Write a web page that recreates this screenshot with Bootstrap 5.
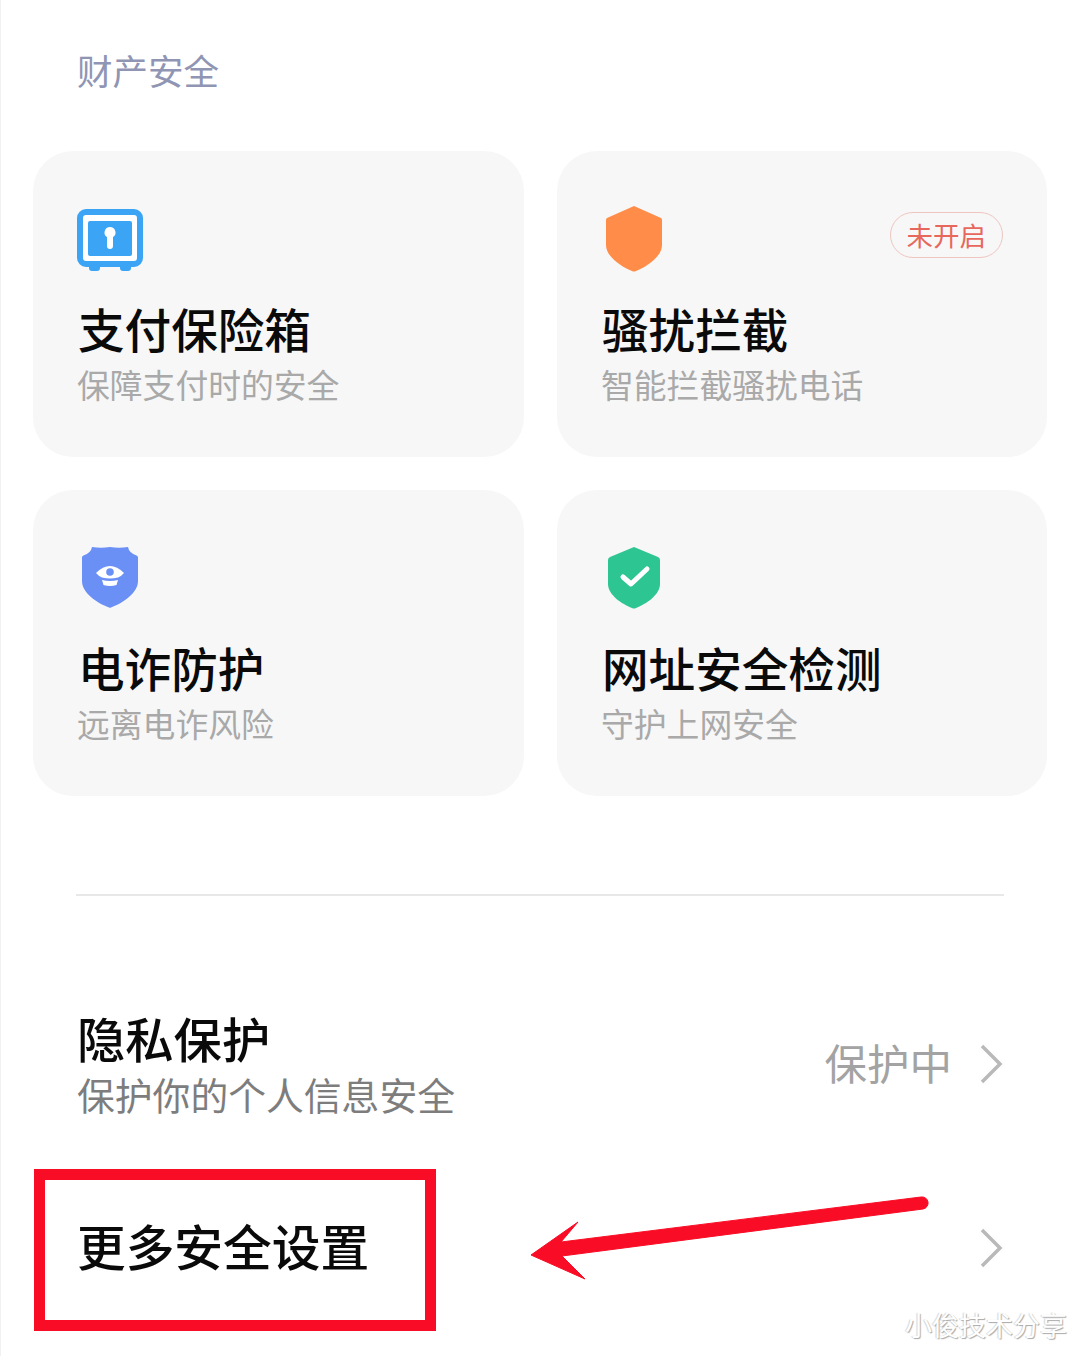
<!DOCTYPE html>
<html lang="zh-CN">
<head>
  <meta charset="UTF-8" />
  <meta name="viewport" content="width=device-width, initial-scale=1.0"/>
  <title>财产安全</title>
  <link href="https://cdn.jsdelivr.net/npm/bootstrap@5.3.0/dist/css/bootstrap.min.css" rel="stylesheet"/>
  <style>
    body {
      background: #fff;
      font-family: "Noto Sans CJK SC", "Liberation Sans", sans-serif;
      height: 1356px;
      overflow: hidden;
    }
    .screen {
      height: 1356px;
      padding: 0 33px 0 32px;
      border-left: 1px solid #f1f1f1;
    }
    .sec-title {
      font-size: 35.5px;
      line-height: 52px;
      color: #9095b4;
      padding: 44px 0 55px 44px;
    }
    .tile-grid {
      display: grid;
      grid-template-columns: 491px 490px;
      grid-auto-rows: 306px;
      gap: 33px;
    }
    .tile {
      background: #f7f7f7;
      border-radius: 40px;
      padding: 52px 44px 0 45px;
    }
    .tile-top {
      height: 82px;
    }
    .ico-safe {
      margin: 6px 0 0 -1px;
    }
    .ico-orange {
      margin: 3px 0 0 3px;
    }
    .ico-blue {
      margin: 3px 0 0 4px;
    }
    .ico-green {
      margin: 5px 0 0 6px;
    }
    .tile-name {
      font-size: 46.6px;
      font-weight: 500;
      line-height: 60px;
      color: #0a0a0a;
      margin-top: 13px;
    }
    .tile-sub {
      font-size: 32.8px;
      line-height: 46px;
      color: #a9a9a9;
      margin: 3px 0 0 -1px;
    }
    .off-pill {
      border: 1px solid #efc5c0;
      border-radius: 24px;
      color: #e8675c;
      font-size: 26.5px;
      line-height: 44px;
      padding: 0 16px;
      margin-top: 9px;
    }
    .split {
      border-top: 2px solid #e8e8e8;
      margin: 98px 43px 0 43px;
    }
    .set-row {
      padding: 0 44px;
    }
    .set-one {
      margin-top: 109px;
      height: 118px;
    }
    .set-two {
      margin-top: 75px;
      height: 100px;
    }
    .set-name {
      font-size: 48.3px;
      font-weight: 500;
      line-height: 60px;
      color: #0a0a0a;
    }
    .set-two .set-name {
      font-size: 48.7px;
      padding-bottom: 6px;
    }
    .set-sub {
      font-size: 37.8px;
      line-height: 54px;
      color: #7d7d7d;
    }
    .set-state {
      font-size: 42.5px;
      color: #a3a3a3;
      line-height: 60px;
      padding-bottom: 5px;
    }
    .chev {
      width: 24px;
      height: 42px;
      margin-left: 27px;
    }
    .red-box {
      position: absolute;
      left: 33px;
      top: 1169px;
      width: 402px;
      height: 162px;
      border: 11px solid #f90c25;
    }
    .red-arrow {
      position: absolute;
      left: 523px;
      top: 1190px;
      width: 410px;
      height: 95px;
    }
    .mark-text {
      position: absolute;
      left: 904px;
      top: 1305px;
      font-size: 27px;
      line-height: 40px;
      color: #fff;
      white-space: nowrap;
      text-shadow: 1px 1px 1px #a8a8a8, -1px 0 1px #d4d4d4;
    }
  </style>
</head>
<body>

<div class="screen position-relative">
  <div class="sec-title">财产安全</div>

  <div class="tile-grid">
    <div class="tile">
      <div class="tile-top d-flex justify-content-between align-items-start">
        <svg class="ico-safe" width="66" height="62" viewBox="0 0 66 62">
          <path d="M12 56h11v3a3 3 0 0 1-3 3h-5a3 3 0 0 1-3-3zM43 56h11v3a3 3 0 0 1-3 3h-5a3 3 0 0 1-3-3z" fill="#3ba4f5"/>
          <rect x="3" y="3" width="60" height="52" rx="6" fill="#fff" stroke="#3ba4f5" stroke-width="6"/>
          <rect x="11" y="12" width="44" height="35" rx="2" fill="#3ba4f5"/>
          <path d="M33 18a5.500 5.500 0 0 1 3 10.100V37a3 3 0 0 1-6 0v-8.900A5.500 5.500 0 0 1 33 18z" fill="#fff"/>
        </svg>
      </div>
      <div class="tile-name">支付保险箱</div>
      <div class="tile-sub">保障支付时的安全</div>
    </div>

    <div class="tile">
      <div class="tile-top d-flex justify-content-between align-items-start">
        <svg class="ico-orange" width="58" height="66" viewBox="0 0 58 66">
          <path d="M29 0l27 12q1 .5 1 2v25c0 12-16 22-26 26q-2 1-4 0C17 61 1 51 1 39V14q0-1.500 1-2z" fill="#ff8d49"/>
        </svg>
        <span class="off-pill">未开启</span>
      </div>
      <div class="tile-name">骚扰拦截</div>
      <div class="tile-sub">智能拦截骚扰电话</div>
    </div>

    <div class="tile">
      <div class="tile-top d-flex justify-content-between align-items-start">
        <svg class="ico-blue" width="56" height="63" viewBox="0 0 56 63">
          <path d="M10 2q9 1.500 18 0q9 1.500 18 0q1 6 8.500 8.500q1.500 .5 1.500 2V36c0 12-15 22-27 26.500q-1 .5-2 0C15 58 0 48 0 36V12.500q0-1.500 1.500-2Q9 8 10 2z" fill="#6a8ff5"/>
          <path d="M14 28q14-14 28 0q-3 3.500-6 4.500q-8 2-16 0q-3-1-6-4.500z" fill="#fff"/>
          <path d="M20 35q8 2 16 0l-1.500 5q-6.500 2-13 0z" fill="#fff"/>
          <circle cx="28" cy="27" r="3.800" fill="#6a8ff5"/>
        </svg>
      </div>
      <div class="tile-name">电诈防护</div>
      <div class="tile-sub">远离电诈风险</div>
    </div>

    <div class="tile">
      <div class="tile-top d-flex justify-content-between align-items-start">
        <svg class="ico-green" width="52" height="62" viewBox="0 0 52 62">
          <path d="M26 0l24 10q2 1 2 3v24c0 11-14 20-24 24q-2 1-4 0C14 57 0 48 0 37V13q0-2 2-3z" fill="#2dc592"/>
          <path d="M15 30l8 7 16-15" fill="none" stroke="#fff" stroke-width="5" stroke-linecap="round" stroke-linejoin="round"/>
        </svg>
      </div>
      <div class="tile-name">网址安全检测</div>
      <div class="tile-sub">守护上网安全</div>
    </div>
  </div>

  <div class="split"></div>

  <div class="set-row set-one d-flex justify-content-between align-items-center">
    <div>
      <div class="set-name">隐私保护</div>
      <div class="set-sub">保护你的个人信息安全</div>
    </div>
    <div class="d-flex align-items-center">
      <span class="set-state">保护中</span>
      <svg class="chev" viewBox="0 0 24 42"><path d="M3 3l18 18L3 39" fill="none" stroke="#b9b9b9" stroke-width="3.500"/></svg>
    </div>
  </div>

  <div class="set-row set-two d-flex justify-content-between align-items-center">
    <div class="set-name">更多安全设置</div>
    <svg class="chev" viewBox="0 0 24 42"><path d="M3 3l18 18L3 39" fill="none" stroke="#b9b9b9" stroke-width="3.500"/></svg>
  </div>

  <div class="red-box"></div>
  <svg class="red-arrow" viewBox="0 0 410 95">
    <path d="M7 65L54 32L37 52L397 7A6 6 0 0 1 399 19L38 66L61 89z" fill="#f90c25" stroke="#f90c25" stroke-width="1" stroke-linejoin="round"/>
  </svg>
  <div class="mark-text">小俊技术分享</div>
</div>

</body>
</html>
